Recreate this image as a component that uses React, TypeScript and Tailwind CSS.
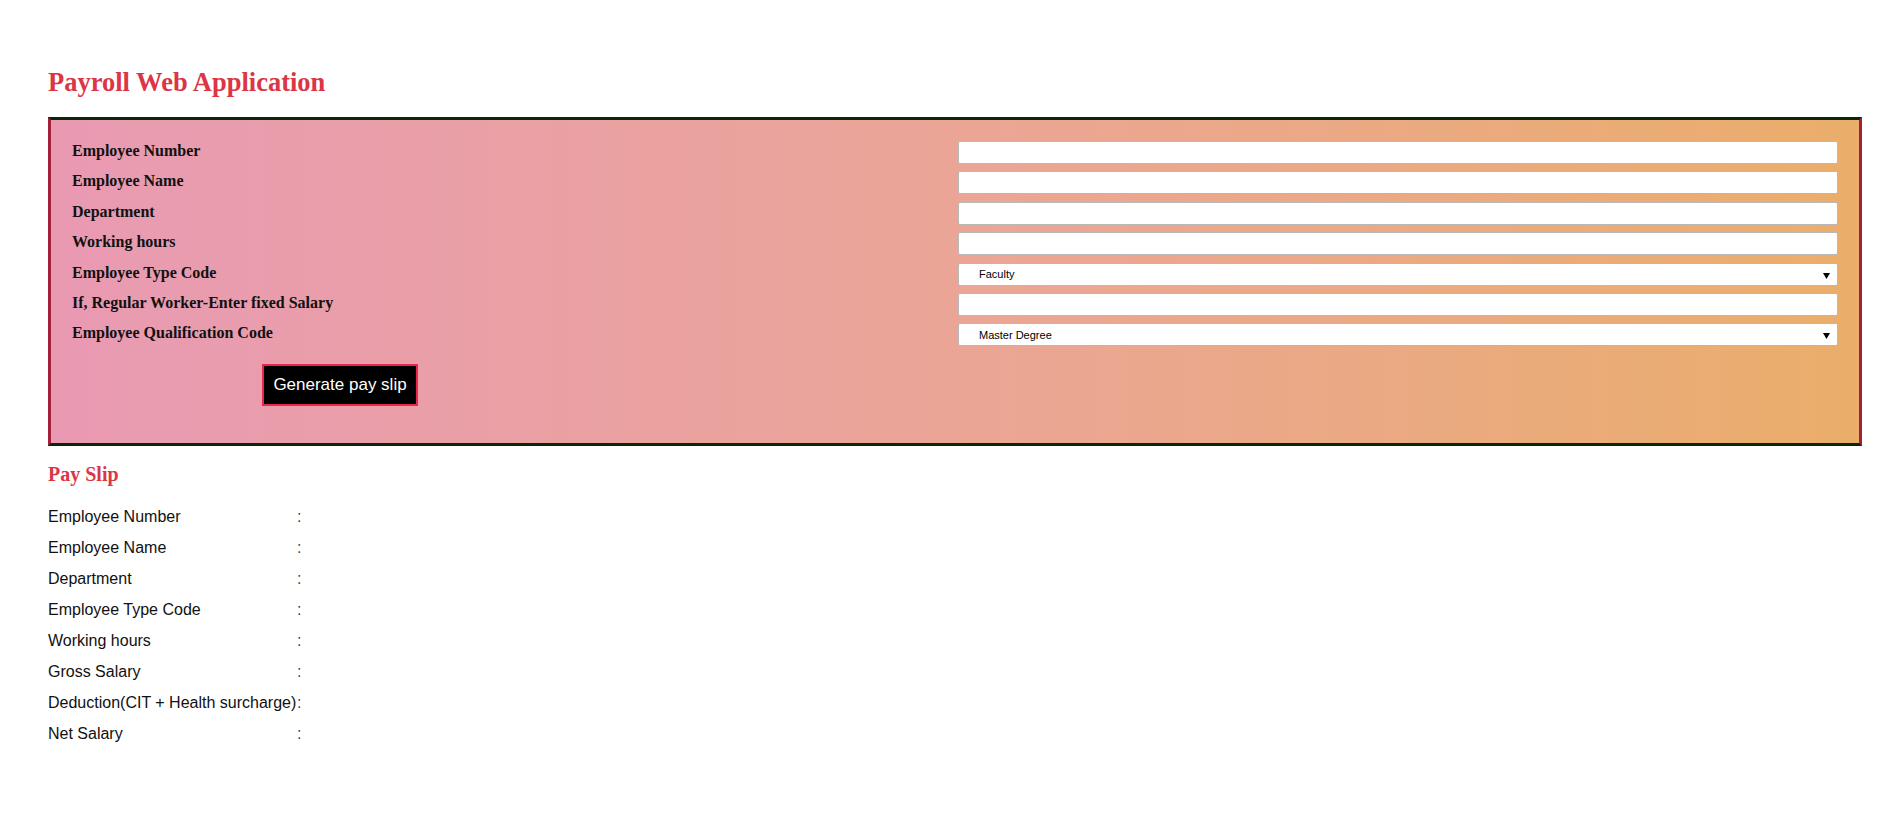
import React from "react";

const serif = { fontFamily: '"Liberation Serif", "Times New Roman", serif' };
const sans = { fontFamily: '"Liberation Sans", Arial, sans-serif' };

function Arrow() {
  return (
    <svg width="7" height="6" viewBox="0 0 7 6" className="absolute right-[8px] top-[10px] pointer-events-none">
      <path d="M0 0 H7 L3.5 6 Z" fill="#000" />
    </svg>
  );
}

function TextBox() {
  return (
    <input
      type="text"
      className="block w-full h-[23px] bg-white border border-[#b9b9b9] rounded-[2px] outline-none"
    />
  );
}

function SelectBox({ value }: { value: string }) {
  return (
    <div className="relative w-full h-[23px]">
      <select
        defaultValue={value}
        className="block appearance-none w-full h-[23px] bg-white border border-[#b9b9b9] rounded-[2px] pl-[20px] text-[11px] text-black outline-none"
        style={sans}
      >
        <option>{value}</option>
      </select>
      <Arrow />
    </div>
  );
}

const formRows: { label: string; kind: "text" | "select"; value?: string }[] = [
  { label: "Employee Number", kind: "text" },
  { label: "Employee Name", kind: "text" },
  { label: "Department", kind: "text" },
  { label: "Working hours", kind: "text" },
  { label: "Employee Type Code", kind: "select", value: "Faculty" },
  { label: "If, Regular Worker-Enter fixed Salary", kind: "text" },
  { label: "Employee Qualification Code", kind: "select", value: "Master Degree" },
];

const slipRows = [
  "Employee Number",
  "Employee Name",
  "Department",
  "Employee Type Code",
  "Working hours",
  "Gross Salary",
  "Deduction(CIT + Health surcharge)",
  "Net Salary",
];

export default function App() {
  return (
    <div className="min-h-screen bg-white pl-[48px] pr-[26px] pt-[67px]">
      <h2 className="text-[26.5px] leading-[30px] font-bold text-[#dc3545] m-0" style={serif}>
        Payroll Web Application
      </h2>

      <div
        className="mt-[20px] border-y-[3px] border-y-[#082808] border-x-[3px] border-x-[#a3203a] bg-linear-to-r from-[#e99ab3] via-[#eba596] to-[#eaae6a] px-[21px] pt-[21px] pb-[37px]"
      >
        <div className="grid grid-cols-[886px_1fr] gap-y-[7.4px]">
          {formRows.map((r) => (
            <React.Fragment key={r.label}>
              <div
                className="text-[16px] leading-[18px] font-bold text-[#111] pt-[1px]"
                style={serif}
              >
                {r.label}
              </div>
              <div>
                {r.kind === "text" ? <TextBox /> : <SelectBox value={r.value!} />}
              </div>
            </React.Fragment>
          ))}
        </div>
        <div className="mt-[18px] pl-[190px]">
          <button
            className="h-[42px] w-[156px] bg-black border-2 border-[#e8284a] text-white text-[17px] leading-[20px]"
            style={sans}
          >
            Generate pay slip
          </button>
        </div>
      </div>

      <h3 className="mt-[17px] text-[20px] leading-[22px] font-bold text-[#dc3545]" style={serif}>
        Pay Slip
      </h3>

      <div className="mt-[23px] flex flex-col text-[16px] leading-[18px] text-[#111]" style={sans}>
        {slipRows.map((l) => (
          <div key={l} className="flex h-[31px]">
            <span className="w-[249px]">{l}</span>
            <span className="text-[#444]">:</span>
          </div>
        ))}
      </div>
    </div>
  );
}
